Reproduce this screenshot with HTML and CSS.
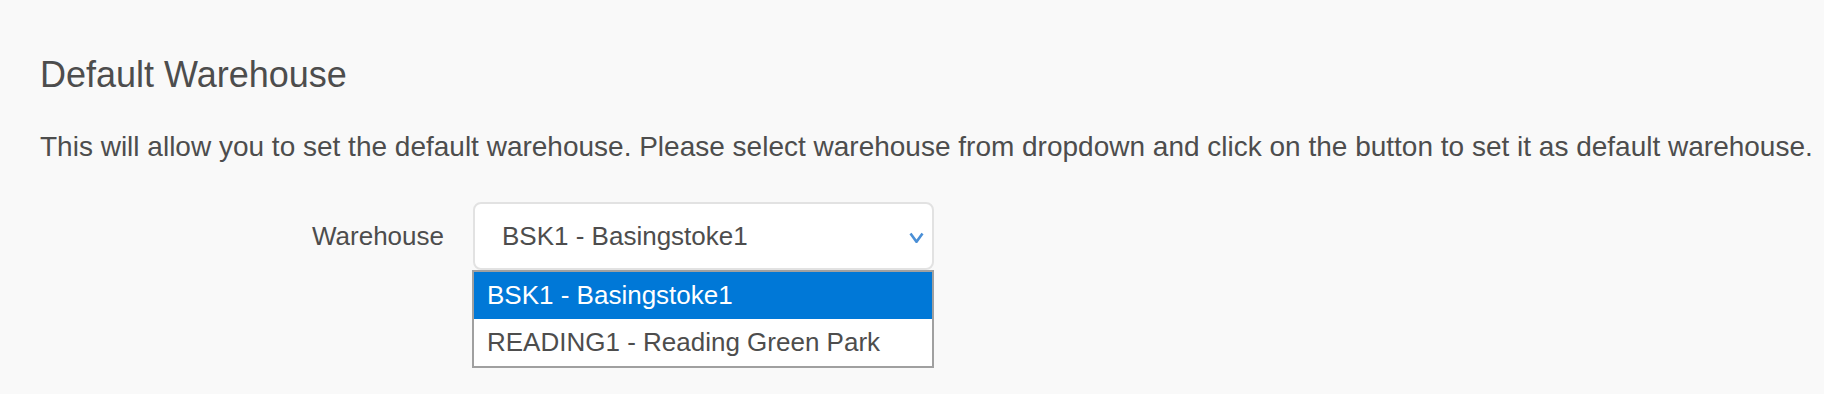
FILE: index.html
```html
<!DOCTYPE html>
<html lang="en">
<head>
<meta charset="utf-8">
<title>Default Warehouse</title>
<link rel="stylesheet" href="styles.css">
</head>
<body>
<main class="page">
  <h3 class="title">Default Warehouse</h3>
  <p class="intro">This will allow you to set the default warehouse. Please select warehouse from dropdown and click on the button to set it as default warehouse.</p>
  <div class="form-row">
    <label class="label">Warehouse</label>
    <div class="select-wrap">
      <div class="select">
        <span class="select-value">BSK1 - Basingstoke1</span>
        <svg class="chevron" width="15" height="11" viewBox="0 0 15 11" aria-hidden="true">
          <polyline points="1.5,1.5 7.5,9.8 13.5,1.5" fill="none" stroke="#4a8fd6" stroke-width="2.6" stroke-linejoin="miter"/>
        </svg>
      </div>
      <div class="options">
        <div class="option selected">BSK1 - Basingstoke1</div>
        <div class="option">READING1 - Reading Green Park</div>
      </div>
    </div>
  </div>
</main>
</body>
</html>
```

FILE: styles.css
```css
html, body {
  margin: 0;
  padding: 0;
  background: #f9f9f9;
}

body {
  font-family: "Liberation Sans", Arial, sans-serif;
  color: #4d4d4d;
}

.page {
  padding: 55px 0 0 40px;
}

.title {
  margin: 0;
  font-size: 36px;
  line-height: 40px;
  font-weight: normal;
  color: #4d4d4d;
}

.intro {
  margin: 36px 0 0 0;
  font-size: 28px;
  line-height: 32px;
  white-space: nowrap;
}

.form-row {
  display: grid;
  grid-template-columns: 433px 461px;
  margin-top: 39px;
  align-items: start;
}

.label {
  text-align: right;
  padding-right: 29px;
  font-size: 26px;
  line-height: 68px;
}

.select-wrap {
  display: flex;
  flex-direction: column;
}

.select {
  height: 64px;
  box-sizing: content-box;
  border: 2px solid #e2e2e2;
  border-radius: 8px;
  background: #ffffff;
  display: flex;
  align-items: center;
  justify-content: space-between;
  padding: 0 8px 0 27px;
  font-size: 26px;
  line-height: 30px;
}

.chevron {
  display: block;
  margin-top: 3px;
}

.options {
  margin-left: -1px;
  width: 458px;
  border: 2px solid #a0a0a0;
  background: #ffffff;
}

.option {
  height: 47px;
  line-height: 47px;
  padding-left: 13px;
  font-size: 26px;
  color: #4d4d4d;
  white-space: nowrap;
}

.option.selected {
  background: #0078d7;
  color: #ffffff;
}
```
